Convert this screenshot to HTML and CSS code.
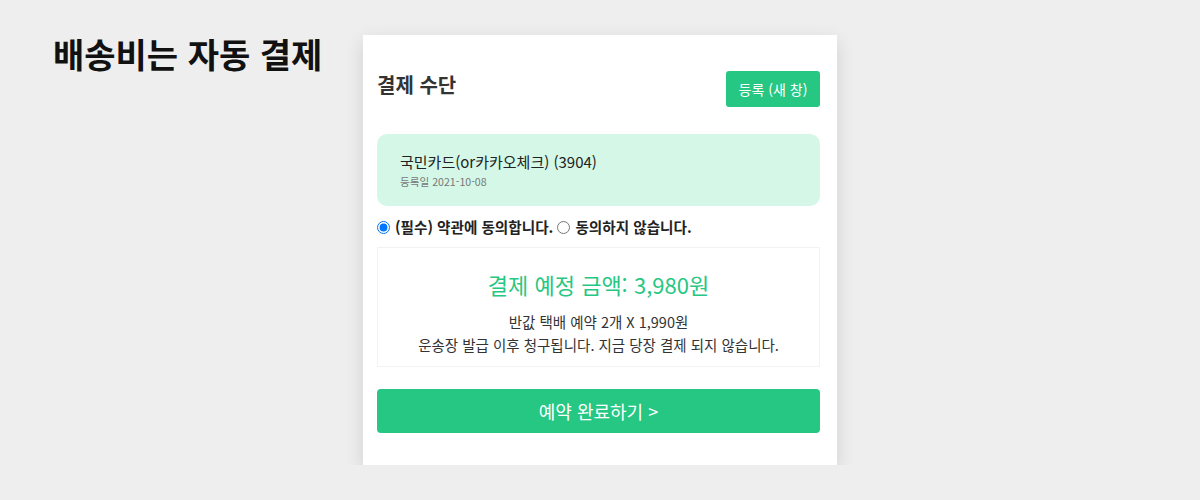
FILE: index.html
```html
<!DOCTYPE html>
<html lang="ko">
<head>
    <meta charset="UTF-8">
    <meta name="viewport" content="width=device-width, initial-scale=1.0">
    <title>배송비는 자동 결제</title>
    <link rel="stylesheet" href="styles.css">
</head>
<body>
    <div class="page">
        <h1 class="page-title">배송비는 자동 결제</h1>

        <div class="card">
            <div class="card-header">
                <h2>결제 수단</h2>
                <button class="button small">등록 (새 창)</button>
            </div>

            <div class="pay-method">
                <div class="pay-name">국민카드(or카카오체크) (3904)</div>
                <div class="pay-date">등록일 2021-10-08</div>
            </div>

            <div class="agree">
                <label><input type="radio" name="agree" checked> (필수) 약관에 동의합니다.</label>
                <label><input type="radio" name="agree"> 동의하지 않습니다.</label>
            </div>

            <div class="amount">
                <div class="amount-title">결제 예정 금액: 3,980원</div>
                <p>반값 택배 예약 2개 X 1,990원<br>운송장 발급 이후 청구됩니다. 지금 당장 결제 되지 않습니다.</p>
            </div>

            <button class="button large">예약 완료하기 &gt;</button>
        </div>
    </div>
</body>
</html>
```

FILE: styles.css
```css
body {
    font-family: 'Noto Sans CJK KR', 'Noto Sans', sans-serif;
    background: #eeeeee;
    margin: 0;
    color: #333;
}

.page {
    display: flex;
    align-items: flex-start;
    padding: 35px 0 0 53px;
}

.page-title {
    width: 310px;
    margin: -6px 0 0;
    font-size: 34px;
    font-weight: bold;
    line-height: 50px;
    color: #111;
}

.card {
    width: 443px;
    background: #fff;
    padding: 36px 17px 32px 14px;
    box-shadow: 0 6px 18px rgba(0, 0, 0, 0.12);
}

.card-header {
    display: flex;
    justify-content: space-between;
    align-items: flex-start;
    margin-bottom: 27px;
}

.card-header h2 {
    margin: 0;
    font-size: 20px;
    font-weight: bold;
    line-height: 28px;
    color: #333;
}

.button {
    background: #26c782;
    color: #fff;
    border: none;
    cursor: pointer;
    font-family: inherit;
}

.button.small {
    height: 36px;
    width: 94px;
    padding: 0;
    border-radius: 3px;
    font-size: 14px;
}

.button.large {
    display: block;
    width: 100%;
    height: 44px;
    margin-top: 22px;
    border-radius: 4px;
    font-size: 18px;
}

.pay-method {
    background: #d4f7e7;
    border-radius: 10px;
    height: 72px;
    padding: 17px 23px 0;
    box-sizing: border-box;
}

.pay-name {
    font-size: 15px;
    line-height: 22px;
    color: #222;
}

.pay-date {
    font-size: 10.6px;
    line-height: 18px;
    color: #777;
}

.agree {
    display: flex;
    gap: 4px;
    height: 41px;
    align-items: center;
    font-size: 14.6px;
    font-weight: bold;
    color: #222;
}

.agree input {
    margin: 0 1px 0 0;
    width: 13px;
    height: 13px;
    vertical-align: -1px;
}

.amount {
    border: 1px solid #f2f2f2;
    height: 120px;
    box-sizing: border-box;
    text-align: center;
    padding-top: 20px;
}

.amount-title {
    font-size: 22px;
    line-height: 32px;
    color: #26c782;
}

.amount p {
    margin: 10px 0 0;
    font-size: 14.5px;
    line-height: 23px;
    color: #333;
}
```
